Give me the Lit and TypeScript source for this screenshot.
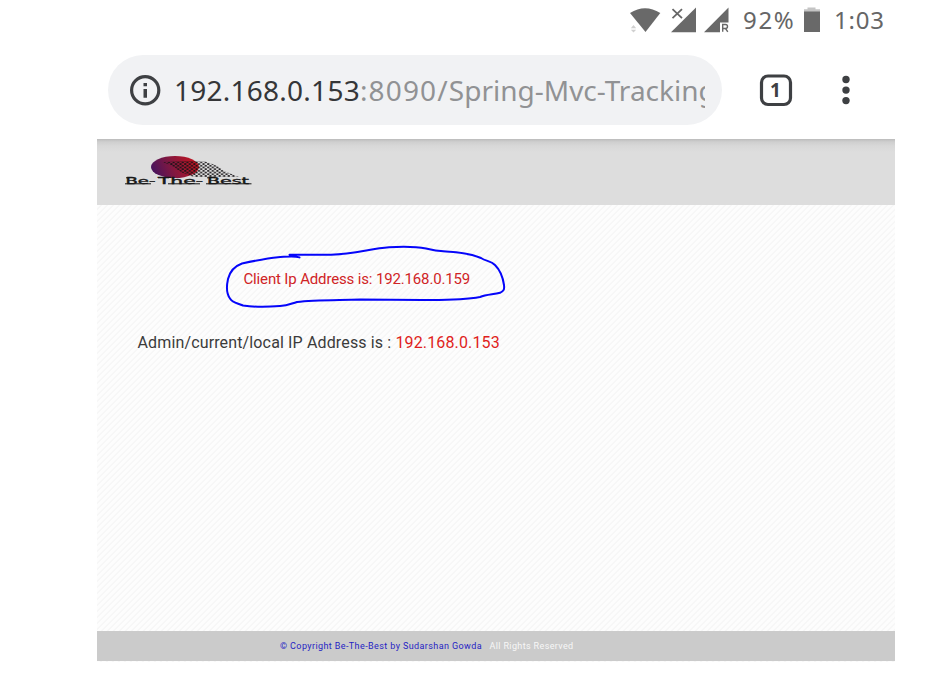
import { LitElement, html, css, svg } from "lit";
import { customElement } from "lit/decorators.js";

@customElement("status-bar")
class StatusBar extends LitElement {
  static styles = css`
    :host { display: flex; height: 40px; align-items: flex-start; padding-left: 626px; box-sizing: border-box; color: #666; font: 24px/40px "Noto Sans", sans-serif; }
    svg { display: block; flex: none; }
    .percent { width: 60px; letter-spacing: 1.7px; margin-left: 8px; white-space: nowrap; }
    .time { margin-left: 13px; letter-spacing: 0.8px; }
  `;
  render() {
    return html`
      <svg width="109" height="40" viewBox="626 0 109 40" fill="#696969">
        <path d="M630 13Q645 3.500 660.300 13L645.500 32Z" />
        <path d="M630.800 28.300L633.500 25L636.200 28.300ZM630.800 29.700H636.200L633.500 32.500Z" fill="#d0d0d0" />
        <path d="M671 32.200L696 7.500V32.200Z" />
        <path d="M672.500 9.200L682 18.200M682 9.200L672.500 18.200" stroke="#666" stroke-width="1.800" />
        <path d="M704 32.200L728.500 7.500V22.500H720V32.200Z" />
        <path d="M722.700 31.800V24.500H725.500Q727.500 24.500 727.500 26.500T725.500 28.500H722.700M725.500 28.500L727.800 31.800" fill="none" stroke="#696969" stroke-width="1.400" />
      </svg>
      <span class="percent">92%</span>
      <svg width="18" height="40" viewBox="803 0 18 40">
        <path d="M807.500 7.500H815.500V9.300H820V12H804V9.300H807.500Z" fill="#c4c4c4" />
        <path d="M804 11.500H820V32H804Z" fill="#696969" />
      </svg>
      <span class="time">1:03</span>
    `;
  }
}

@customElement("address-bar")
class AddressBar extends LitElement {
  static styles = css`
    :host { display: flex; align-items: center; height: 70px; margin-top: 15px; padding-left: 108px; }
    .pill { display: flex; align-items: center; width: 614px; height: 70px; box-sizing: border-box; border-radius: 35px; background: #f1f2f4; padding-left: 21px; }
    .url { width: 531px; margin-left: 13px; overflow: hidden; white-space: nowrap; font: 28px/50px "Noto Sans", sans-serif; color: #919294; }
    .host { color: #353638; letter-spacing: 0.25px; }
    .port { letter-spacing: 1.15px; }
    .path { letter-spacing: 0; }
    .info, .tabs, .menu { display: block; flex: none; }
    .tabs { margin-left: 37px; }
    .menu { margin-left: 47px; }
    .count { font: 700 19px "Noto Sans", sans-serif; }
  `;
  render() {
    return html`
      <div class="pill">
        <svg class="info" width="32" height="32" viewBox="0 0 32 32">
          <circle cx="16.200" cy="16.300" r="13.600" fill="none" stroke="#3e4043" stroke-width="3.200" />
          <path d="M14.500 9H18V12.200H14.500ZM14.500 15H18V23.800H14.500Z" fill="#3e4043" />
        </svg>
        <div class="url"><span class="host">192.168.0.153</span><span class="port">:8090/</span><span class="path">Spring-Mvc-Tracking</span></div>
      </div>
      <svg class="tabs" width="34" height="34" viewBox="0 0 34 34">
        <rect x="2.500" y="3" width="29" height="28.500" rx="6.500" fill="none" stroke="#3e4043" stroke-width="3.200" />
        <text class="count" x="16.500" y="24" text-anchor="middle" fill="#3e4043">1</text>
      </svg>
      <svg class="menu" width="12" height="32" viewBox="0 0 12 32" fill="#3e4043">
        <circle cx="6" cy="5.500" r="3.700" /><circle cx="6" cy="16.100" r="3.700" /><circle cx="6" cy="26.600" r="3.700" />
      </svg>
    `;
  }
}

@customElement("site-logo")
class SiteLogo extends LitElement {
  static styles = css`
    :host { display: block; width: 130px; height: 36px; }
    svg { display: block; }
    .name { font: 400 9px "DejaVu Sans", sans-serif; }
  `;
  render() {
    return html`
      <svg width="130" height="36" viewBox="123 152 130 36">
        <defs>
          <linearGradient id="disc" x1="0" y1=".6" x2="1" y2=".4">
            <stop offset="0" stop-color="#46145e" /><stop offset=".45" stop-color="#84183f" /><stop offset="1" stop-color="#c4141e" />
          </linearGradient>
          <pattern id="mesh" width="4.600" height="3.400" patternUnits="userSpaceOnUse">
            <ellipse cx="1.150" cy=".85" rx="1.300" ry=".85" fill="#161316" /><ellipse cx="3.450" cy="2.550" rx="1.300" ry=".85" fill="#161316" />
          </pattern>
        </defs>
        <ellipse cx="175" cy="167" rx="24" ry="11" fill="url(#disc)" />
        <path d="M163 162Q188 160.500 205 161.500Q218 165 224 171L239 177H194Q180 173 174 167Z" fill="url(#mesh)" />
        ${[["Be-", 125.5, 30], ["The-", 158, 45], ["Best", 207, 42]].map(([label, x, length]) => svg`
          <text class="name" x=${x} y="184" textLength=${length} lengthAdjust="spacingAndGlyphs" fill="#171717" stroke="#171717" stroke-width=".35">${label}</text>`)}
        <path d="M125 183.800H151M168 183.800H200M206 183.800H251.500M126 177.800H134M158 177.800H169M207 177.800H215" stroke="#171717" stroke-width="1" />
      </svg>
    `;
  }
}

@customElement("app-root")
class AppRoot extends LitElement {
  static styles = css`
    :host { display: block; width: 947px; height: 684px; background: #fff; overflow: hidden; font-family: Roboto, sans-serif; }
    .page { width: 798px; margin: 14px 0 0 97px; height: 523px; display: flex; flex-direction: column; background: repeating-linear-gradient(135deg, #fdfdfd 0 2px, #f7f7f7 2.700px 3.700px, #fdfdfd 4.243px); }
    header { height: 66px; box-sizing: border-box; padding: 13px 0 0 26px; background: linear-gradient(#bcbcbc, #cfcfcf 3px, #d8d8d8 7px, #ddd 13px); flex: none; }
    main { flex: 1; min-height: 0; }
    .client { position: relative; display: flex; width: 282px; height: 64px; margin: 39px 0 0 127px; }
    .client-text { font-size: 15px; line-height: 20px; margin: 25px 0 0 19.500px; color: #d02426; white-space: nowrap; letter-spacing: -0.15px; }
    .ring { position: absolute; left: 0; top: 0; }
    .local { margin: 24px 0 0 40.500px; font-size: 16px; line-height: 22px; color: #3b3b3b; white-space: nowrap; letter-spacing: 0.14px; }
    .local-ip { color: #e01e20; }
    footer { height: 30px; flex: none; margin-bottom: 1px; padding-left: 183px; background: #cbcbcb; font-size: 9px; line-height: 30px; white-space: nowrap; color: #f7f7f7; letter-spacing: 0.37px; }
    .copyright { color: #261fc4; margin-right: 7.500px; letter-spacing: 0.4px; }
  `;
  render() {
    return html`
      <status-bar></status-bar>
      <address-bar></address-bar>
      <div class="page">
        <header><site-logo></site-logo></header>
        <main>
          <div class="client">
            <span class="client-text">Client Ip Address is: 192.168.0.159</span>
            <svg class="ring" width="282" height="64" viewBox="224 244 282 64" fill="none" stroke="#0505fa" stroke-width="2" stroke-linecap="round" stroke-linejoin="round">
              <path d="M289.500 254.700H331C355 254 371 248.500 389 247.300C404 246.500 419 247.200 426 248.500C434 250.500 438 251 446 251.600C460 252.500 473 254.500 481 258C486 261.500 491 260.500 495 265C500 270 503 278 504 285C504.500 289.500 504 291 500 292.800C493 294.500 486 294.500 480 297C462 300.500 443 300 422 300L360 299.600C334 300.300 313 300 297 302C290 304 288 305.500 280 306C268 307 253 307 243 305.500C238 303 233 303.500 230 298.500C226.500 294 226.500 286 228 279C230 271 235 266 242 263.500C256 260.500 269 258 278 257.200C286 256.800 294 255.500 299.500 257.400" />
            </svg>
          </div>
          <div class="local">Admin/current/local IP Address is : <span class="local-ip">192.168.0.153</span></div>
        </main>
        <footer><span class="copyright">© Copyright Be-The-Best by Sudarshan Gowda</span>All Rights Reserved</footer>
      </div>
    `;
  }
}
